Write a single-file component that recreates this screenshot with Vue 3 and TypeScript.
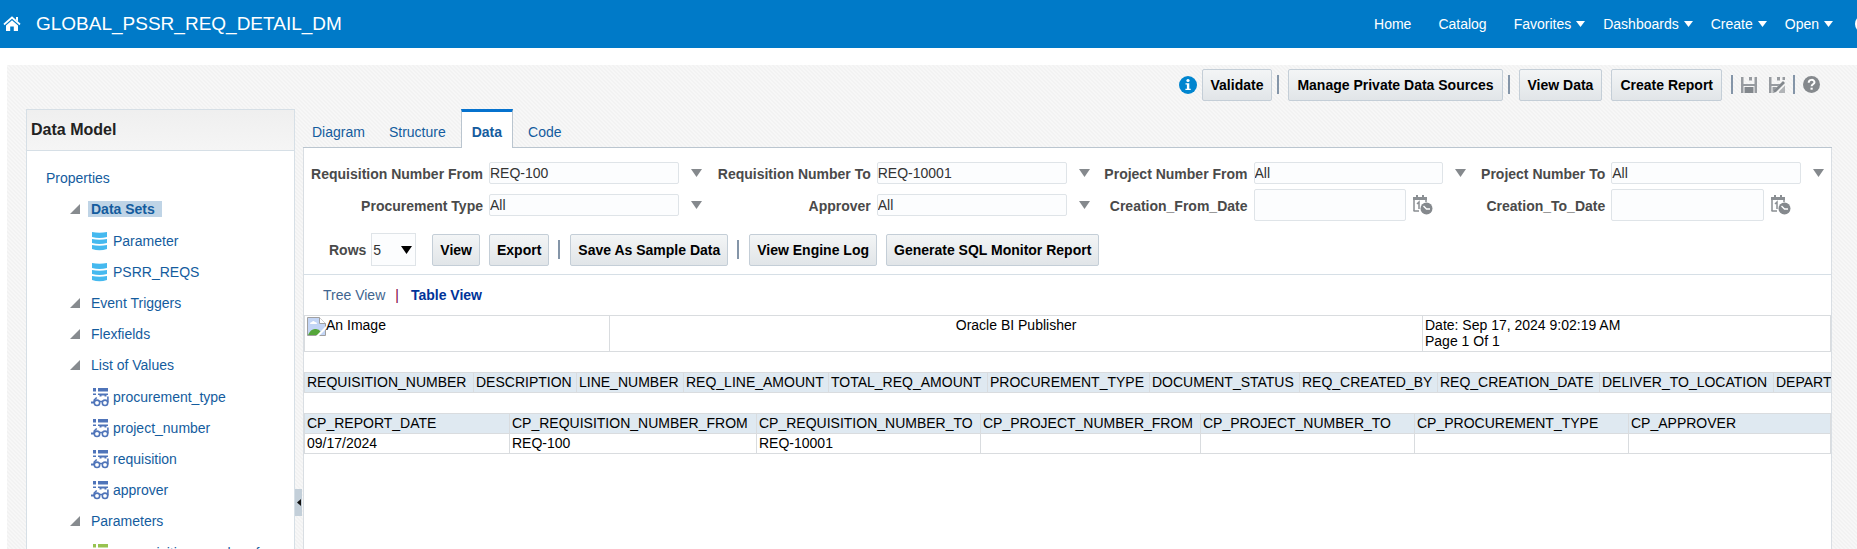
<script setup lang="ts">
import { ref } from 'vue'

interface NavItem { label: string; menu: boolean }
interface TreeChild { label: string; kind: 'set' | 'lov' | 'param' }
interface TreeGroup { label: string; selected?: boolean; children: TreeChild[] }
interface Filter { id: string; label: string; value: string; date?: boolean }

const navItems: NavItem[] = [
  { label: 'Home', menu: false },
  { label: 'Catalog', menu: false },
  { label: 'Favorites', menu: true },
  { label: 'Dashboards', menu: true },
  { label: 'Create', menu: true },
  { label: 'Open', menu: true },
]

const groups: TreeGroup[] = [
  {
    label: 'Data Sets',
    selected: true,
    children: [
      { label: 'Parameter', kind: 'set' },
      { label: 'PSRR_REQS', kind: 'set' },
    ],
  },
  { label: 'Event Triggers', children: [] },
  { label: 'Flexfields', children: [] },
  {
    label: 'List of Values',
    children: [
      { label: 'procurement_type', kind: 'lov' },
      { label: 'project_number', kind: 'lov' },
      { label: 'requisition', kind: 'lov' },
      { label: 'approver', kind: 'lov' },
    ],
  },
  { label: 'Parameters', children: [{ label: 'p_requisition_number_from', kind: 'param' }] },
]

const tabs = ['Diagram', 'Structure', 'Data', 'Code']
const activeTab = ref('Data')

const filters = ref<Filter[]>([
  { id: 'req-from', label: 'Requisition Number From', value: 'REQ-100' },
  { id: 'req-to', label: 'Requisition Number To', value: 'REQ-10001' },
  { id: 'proj-from', label: 'Project Number From', value: 'All' },
  { id: 'proj-to', label: 'Project Number To', value: 'All' },
  { id: 'proc-type', label: 'Procurement Type', value: 'All' },
  { id: 'approver', label: 'Approver', value: 'All' },
  { id: 'date-from', label: 'Creation_From_Date', value: '', date: true },
  { id: 'date-to', label: 'Creation_To_Date', value: '', date: true },
])
const rows = ref('5')

const requisitionColumns = [
  'REQUISITION_NUMBER', 'DESCRIPTION', 'LINE_NUMBER', 'REQ_LINE_AMOUNT', 'TOTAL_REQ_AMOUNT',
  'PROCUREMENT_TYPE', 'DOCUMENT_STATUS', 'REQ_CREATED_BY', 'REQ_CREATION_DATE',
  'DELIVER_TO_LOCATION', 'DEPARTMENT',
]
const parameterColumns = [
  'CP_REPORT_DATE', 'CP_REQUISITION_NUMBER_FROM', 'CP_REQUISITION_NUMBER_TO',
  'CP_PROJECT_NUMBER_FROM', 'CP_PROJECT_NUMBER_TO', 'CP_PROCUREMENT_TYPE', 'CP_APPROVER',
]
const parameterValues = ['09/17/2024', 'REQ-100', 'REQ-10001', '', '', '', '']
</script>

<template>
  <div class="app">
    <header class="banner">
      <a href="#" class="home" aria-label="Home">
        <svg width="18" height="16" viewBox="0 0 18 16">
          <path d="M1 8.5 9 1.5l8 7" fill="none" stroke="#fff" stroke-width="1.7" />
          <path d="M13 1h2v4.5l-2-1.8z" fill="#fff" />
          <path d="M9 4.2 15 9.5V15h-4.2v-4.5H7.2V15H3V9.5z" fill="#fff" />
        </svg>
      </a>
      <h1>GLOBAL_PSSR_REQ_DETAIL_DM</h1>
      <nav>
        <a v-for="item in navItems" :key="item.label" href="#" :class="{ menu: item.menu }">
          {{ item.label }}
          <svg v-if="item.menu" width="9" height="6" viewBox="0 0 9 6"><path d="M0 0h9L4.5 6z" fill="#fff" /></svg>
        </a>
        <button class="profile" aria-label="Profile"></button>
      </nav>
    </header>

    <main class="workspace">
      <div class="toolbar">
        <svg class="info" width="18" height="18" viewBox="0 0 18 18">
          <circle cx="9" cy="9" r="9" fill="#0085cf" />
          <circle cx="9" cy="4.5" r="1.6" fill="#fff" />
          <path d="M6.5 7.2h3.800v5.500h1.400V14H6.400v-1.300h1.500V8.500H6.500z" fill="#fff" />
        </svg>
        <button class="btn">Validate</button>
        <span class="bar near"></span>
        <button class="btn spaced">Manage Private Data Sources</button>
        <span class="bar near"></span>
        <button class="btn spaced">View Data</button>
        <button class="btn spaced">Create Report</button>
        <span class="bar"></span>
        <button class="icon-btn tight" aria-label="Save">
          <svg width="16" height="16" viewBox="0 0 16 16">
            <path d="M0 0h2.500v7h11V0H16v16h-2.500V9h-11v7H0z" fill="#979ba0" />
            <path d="M3.500 10h9v6h-9z" fill="#82878c" />
            <path d="M8 0h3v3.500H8z" fill="#979ba0" />
          </svg>
        </button>
        <button class="icon-btn save-as" aria-label="Save As">
          <svg width="16" height="16" viewBox="0 0 16 16">
            <path d="M0 0h2.500v7h9L9 9H2.500v7H0z" fill="#979ba0" />
            <path d="M3.500 10H8l-4 5v1h-.5zM8 0h3v3.500H8zM13.500 0H16v3h-2.500z" fill="#979ba0" />
            <path d="m14 4 2 2-9 9-3 1 1-3z" fill="#82878c" />
            <path d="M10 14.500 16 8.500V16h-6z" fill="#b1b4b7" />
          </svg>
        </button>
        <span class="bar tight"></span>
        <button class="icon-btn tight" aria-label="Help">
          <svg width="17" height="17" viewBox="0 0 17 17">
            <circle cx="8.5" cy="8.5" r="8.5" fill="#85898d" />
            <path d="M5.700 6.700C5.700 3 11.500 3 11.500 6.300c0 2-2.900 2-2.900 4" fill="none" stroke="#fff" stroke-width="2" />
            <path d="M7.500 11.700h2.200v2H7.500z" fill="#fff" />
          </svg>
        </button>
      </div>

      <div class="columns">
        <aside class="side">
          <h2>Data Model</h2>
          <ul class="tree">
            <li><div class="row root"><a href="#">Properties</a></div></li>
            <li v-for="group in groups" :key="group.label">
              <div class="row group">
                <svg width="10" height="10" viewBox="0 0 10 10"><path d="M10 0v10H0z" fill="#878b8f" /></svg>
                <a href="#" :class="{ selected: group.selected }">{{ group.label }}</a>
              </div>
              <ul v-if="group.children.length" class="children">
                <li v-for="child in group.children" :key="child.label" class="row leaf">
                  <svg v-if="child.kind === 'set'" width="18" height="20" viewBox="0 0 18 20">
                    <path d="M1 1q7.500 1.500 15 0v5q-7.500 2-15 0zM1 8q7.500 1.500 15 0v4q-7.500 2-15 0zM1 14q7.500 1.500 15 0v4q-7.500 2.500-15 0z" fill="#45b9ef" />
                  </svg>
                  <svg v-else width="18" height="20" viewBox="0 0 18 20" :class="child.kind">
                    <g fill="currentColor">
                      <path d="M2 1h3v3.500H2zM7 1h10v3.500H7z" />
                      <path d="M2 6.500h3V8H2zM7 6.500h10v1.500h-1.500v1.500h-2V8.500h-3v1H8.500V8H7z" />
                      <path d="M0 14.500h3v2H0z" />
                    </g>
                    <g fill="none" stroke="currentColor" stroke-width="1.6">
                      <circle cx="6" cy="15.800" r="2.700" />
                      <circle cx="14" cy="15.800" r="2.700" />
                      <path d="M3.200 15.500V13l2.500-2.500M16.900 15.500V9.500M8.500 14.500h3" />
                    </g>
                  </svg>
                  <a href="#">{{ child.label }}</a>
                </li>
              </ul>
            </li>
          </ul>
        </aside>

        <div class="splitter">
          <button aria-label="Collapse pane">
            <svg width="4" height="7" viewBox="0 0 4 7"><path d="M4 0v7L0 3.500z" fill="#111" /></svg>
          </button>
        </div>

        <section class="detail">
          <div class="tabs" role="tablist">
            <button
              v-for="tab in tabs"
              :key="tab"
              role="tab"
              :aria-selected="tab === activeTab"
              :class="{ active: tab === activeTab }"
              @click="activeTab = tab"
            >{{ tab }}</button>
          </div>

          <div class="panel">
            <form class="filters" @submit.prevent>
              <template v-for="filter in filters" :key="filter.id">
                <label :for="filter.id">{{ filter.label }}</label>
                <div class="field" :class="{ date: filter.date }">
                  <input :id="filter.id" v-model="filter.value" type="text">
                  <button v-if="filter.date" type="button" aria-label="Pick date">
                    <svg width="20" height="20" viewBox="0 0 20 20">
                      <path d="M1 16V3h12v4" fill="none" stroke="#8b8f93" stroke-width="1.5" />
                      <path d="M0 2h14v3H0zM3 0h2v4H3zM9 0h2v4H9z" fill="#8b8f93" />
                      <path d="M4 9l2-2v7M.5 16H6" fill="none" stroke="#8b8f93" stroke-width="1.5" />
                      <circle cx="13.5" cy="13.5" r="6" fill="#85898d" />
                      <path d="M10.500 11l3 3h3.500" fill="none" stroke="#fff" stroke-width="1.4" />
                    </svg>
                  </button>
                  <button v-else type="button" aria-label="Show values">
                    <svg width="11" height="8" viewBox="0 0 11 8"><path d="M0 0h11L5.500 8z" fill="#85898d" /></svg>
                  </button>
                </div>
              </template>
            </form>

            <div class="actions">
              <label for="rows">Rows</label>
              <span class="select">
                <select id="rows" v-model="rows">
                  <option>5</option>
                  <option>10</option>
                  <option>50</option>
                </select>
                <svg width="11" height="8" viewBox="0 0 11 8"><path d="M0 0h11L5.500 8z" fill="#000" /></svg>
              </span>
              <button class="btn first">View</button>
              <button class="btn spaced">Export</button>
              <span class="bar"></span>
              <button class="btn after-bar">Save As Sample Data</button>
              <span class="bar"></span>
              <button class="btn after-bar">View Engine Log</button>
              <button class="btn spaced">Generate SQL Monitor Report</button>
            </div>

            <div class="output">
              <div class="views">
                <a href="#">Tree View</a>
                <span class="pipe">|</span>
                <a href="#" class="current">Table View</a>
              </div>

              <table class="report-head">
                <tbody>
                  <tr>
                    <td>
                      <span class="missing">
                        <svg width="19" height="19" viewBox="0 0 19 19">
                          <path d="M.5.5h12l6 6v12H.5z" fill="#c3d5f5" stroke="#a0a0a0" />
                          <path d="M12.500.5v6h6" fill="#fff" stroke="#a0a0a0" />
                          <path d="M3 7q0-2 2-2 1-2 3 0 2 0 2 2z" fill="#fff" />
                          <path d="M1 18q3-7 8-6 3 0 5 3l-3 3z" fill="#55a63a" />
                          <path d="M19 9v3l-7 7H9z" fill="#fff" />
                        </svg>An Image</span>
                    </td>
                    <td class="center">Oracle BI Publisher</td>
                    <td>Date: Sep 17, 2024 9:02:19 AM<br>Page 1 Of 1</td>
                  </tr>
                </tbody>
              </table>

              <table class="requisitions">
                <thead>
                  <tr><th v-for="col in requisitionColumns" :key="col" scope="col">{{ col }}</th></tr>
                </thead>
              </table>

              <table class="params">
                <thead>
                  <tr><th v-for="col in parameterColumns" :key="col" scope="col">{{ col }}</th></tr>
                </thead>
                <tbody>
                  <tr><td v-for="(value, i) in parameterValues" :key="i">{{ value }}</td></tr>
                </tbody>
              </table>
            </div>
          </div>
        </section>
      </div>
    </main>
  </div>
</template>

<style>
body {
  margin: 0;
}
</style>

<style scoped>
* {
  box-sizing: border-box;
}
.app {
  display: flex;
  flex-direction: column;
  height: 100vh;
  overflow: hidden;
  background: #fff;
  color: #000;
  font: 14px/16px "Liberation Sans", Arial, sans-serif;
}
a {
  color: #145c9e;
  text-decoration: none;
}
button {
  padding: 0;
  border: 0;
  background: none;
  font: inherit;
}
svg {
  display: block;
  flex: none;
}
ul {
  margin: 0;
  padding: 0;
  list-style: none;
}

.banner {
  display: flex;
  flex: none;
  align-items: center;
  height: 48px;
  background: #007ac8;
  overflow: hidden;
}
.home {
  margin-left: 3px;
}
h1 {
  flex: 1;
  margin: 0 0 0 15px;
  color: #fff;
  font-size: 19px;
  font-weight: 400;
  line-height: 24px;
}
nav {
  display: flex;
  flex: none;
  align-items: center;
}
nav a {
  display: flex;
  align-items: center;
  gap: 5px;
  margin-right: 27px;
  color: #fff;
}
nav a.menu {
  margin-right: 18px;
}
.profile {
  width: 18px;
  height: 18px;
  margin: 0 -16px 0 4px;
  border: 2px solid #fff;
  border-radius: 50%;
}

.workspace {
  display: flex;
  flex: 1;
  flex-direction: column;
  min-height: 0;
  margin: 17px 0 0 7px;
  padding: 3px 25px 0 19px;
  background: linear-gradient(45deg, #f2f2f2 25%, #f7f7f7 25% 50%, #f2f2f2 50% 75%, #f7f7f7 75%) 0 0 / 4px 4px;
}
.toolbar {
  display: flex;
  flex: none;
  align-items: center;
  justify-content: flex-end;
  height: 33px;
  padding-right: 12px;
}
.info {
  margin-right: 5px;
}
.btn {
  height: 32px;
  padding: 0 7px;
  border: 1px solid #c4ced7;
  border-radius: 2px;
  background: linear-gradient(#f3f5f6, #e1e5e8);
  color: #000;
  font-weight: 700;
  white-space: nowrap;
}
.toolbar .btn {
  padding: 0 8px;
}
.bar {
  width: 2px;
  height: 19px;
  margin-left: 9px;
  background: #8495a8;
}
.bar.near {
  margin-left: 5px;
}
.after-bar {
  margin-left: 10px;
}
.spaced {
  margin-left: 9px;
}
.icon-btn.tight,
.bar.tight {
  margin-left: 8px;
}
.save-as {
  margin-left: 12px;
}

.columns {
  display: flex;
  flex: 1;
  min-height: 0;
  margin-top: 8px;
}
.side {
  flex: none;
  width: 269px;
  border: 1px solid #d6dfe6;
  border-bottom: 0;
  background: #fff;
  overflow: hidden;
}
h2 {
  margin: 0;
  padding: 10px 4px;
  border-bottom: 1px solid #d6dfe6;
  background: linear-gradient(#efefef, #f5f5f5);
  color: #222;
  font-size: 16px;
  line-height: 20px;
}
.tree {
  padding-top: 11px;
}
.row {
  display: flex;
  align-items: center;
  height: 31px;
  white-space: nowrap;
}
.root {
  padding-left: 19px;
}
.group {
  gap: 8px;
  padding-left: 43px;
}
.group a {
  padding: 0 3px;
}
.group .selected {
  padding-right: 7px;
  background: #bfd4e6;
  font-weight: 700;
}
.children {
  padding-top: 1px;
}
.leaf {
  gap: 4px;
  padding-left: 64px;
}
.lov {
  color: #4f74b9;
}
.param {
  color: #97c24f;
}

.splitter {
  display: flex;
  flex: none;
  align-items: flex-end;
  width: 8px;
  padding-bottom: 33px;
}
.splitter button {
  display: flex;
  align-items: center;
  justify-content: center;
  width: 7px;
  height: 27px;
  background: #c3cfd9;
}

.detail {
  display: flex;
  flex: 1;
  flex-direction: column;
  min-width: 0;
}
.tabs {
  display: flex;
  flex: none;
  height: 39px;
  border-bottom: 1px solid #bac5cf;
}
.tabs button {
  height: 39px;
  padding: 7px 9px 0;
  border: 0;
  color: #145c9e;
}
.tabs button + button {
  margin-left: 6px;
}
.tabs button.active {
  padding: 4px 10px 0;
  border: 1px solid #bac5cf;
  border-top: 3px solid #0572ce;
  border-bottom: 0;
  background: #fff;
  font-weight: 700;
}
.panel {
  flex: 1;
  min-height: 0;
  border: 1px solid #d9dee3;
  border-width: 0 1px;
  background: #fff;
}
.filters {
  display: grid;
  grid-template-columns: 185px 1fr 171px 1fr 160px 1fr 141px 1fr;
  grid-auto-rows: 32px;
  align-items: center;
  padding: 9px 3px 0 0;
}
label {
  color: #4a4a4a;
  font-weight: 700;
}
.filters label {
  padding: 2px 6px 0 0;
  text-align: right;
  white-space: nowrap;
}
.field {
  display: flex;
  align-items: center;
  gap: 12px;
  padding-right: 4px;
}
.field input {
  flex: 1;
  width: 0;
  height: 22px;
  padding: 0;
  border: 1px solid #dfe4e8;
  border-radius: 2px;
  background: #fcfdfe;
  color: #333;
  font: inherit;
}
.date {
  gap: 7px;
  padding-right: 37px;
}
.field.date input {
  height: 32px;
}
.actions {
  display: flex;
  align-items: center;
  padding: 12px 0 8px 25px;
  border-bottom: 1px solid #d6dfe6;
}
.select {
  display: flex;
  align-items: center;
  position: relative;
  margin-left: 5px;
}
.select select {
  width: 45px;
  height: 33px;
  padding: 0 1px;
  border: 1px solid #dfe4e8;
  border-radius: 0;
  background: #fcfdfe;
  color: #333;
  font: inherit;
  appearance: none;
}
.select svg {
  position: absolute;
  right: 4px;
  pointer-events: none;
}
.first {
  margin-left: 16px;
}

.output {
  overflow: hidden;
}
.views {
  display: flex;
  gap: 10px;
  padding: 12px 19px;
}
.views a {
  color: #41658f;
}
.views .current {
  margin-left: 2px;
  color: #003399;
  font-weight: 700;
}
.pipe {
  color: #800040;
}
table {
  width: 100%;
  border-collapse: collapse;
}
th,
td {
  height: 20px;
  padding: 1px 2px;
  border: 1px solid #d9dcdf;
  font-weight: 400;
  line-height: 16px;
  text-align: left;
  vertical-align: top;
  white-space: nowrap;
}
th {
  background: #dfe9f1;
}
.report-head,
.params {
  table-layout: fixed;
}
.report-head td {
  height: 36px;
}
.report-head td:nth-child(1) {
  width: 20%;
}
.report-head td:nth-child(3) {
  width: 408px;
}
.report-head .center {
  text-align: center;
}
.missing {
  display: flex;
}
.requisitions,
.params {
  margin-top: 20px;
}
.requisitions {
  width: max-content;
}
.requisitions th {
  min-width: 162px;
}
.requisitions th:nth-child(1) {
  min-width: 169px;
}
.requisitions th:nth-child(2) {
  min-width: 103px;
}
.requisitions th:nth-child(3) {
  min-width: 107px;
}
.requisitions th:nth-child(4) {
  min-width: 145px;
}
.requisitions th:nth-child(5) {
  min-width: 159px;
}
.requisitions th:nth-child(7) {
  min-width: 150px;
}
.requisitions th:nth-child(8) {
  min-width: 138px;
}
.requisitions th:nth-child(10) {
  min-width: 174px;
}
.params th:nth-child(1) {
  width: 205px;
}
.params th:nth-child(2) {
  width: 247px;
}
.params th:nth-child(3) {
  width: 224px;
}
.params th:nth-child(4) {
  width: 220px;
}
.params th:nth-child(5),
.params th:nth-child(6) {
  width: 214px;
}
</style>
